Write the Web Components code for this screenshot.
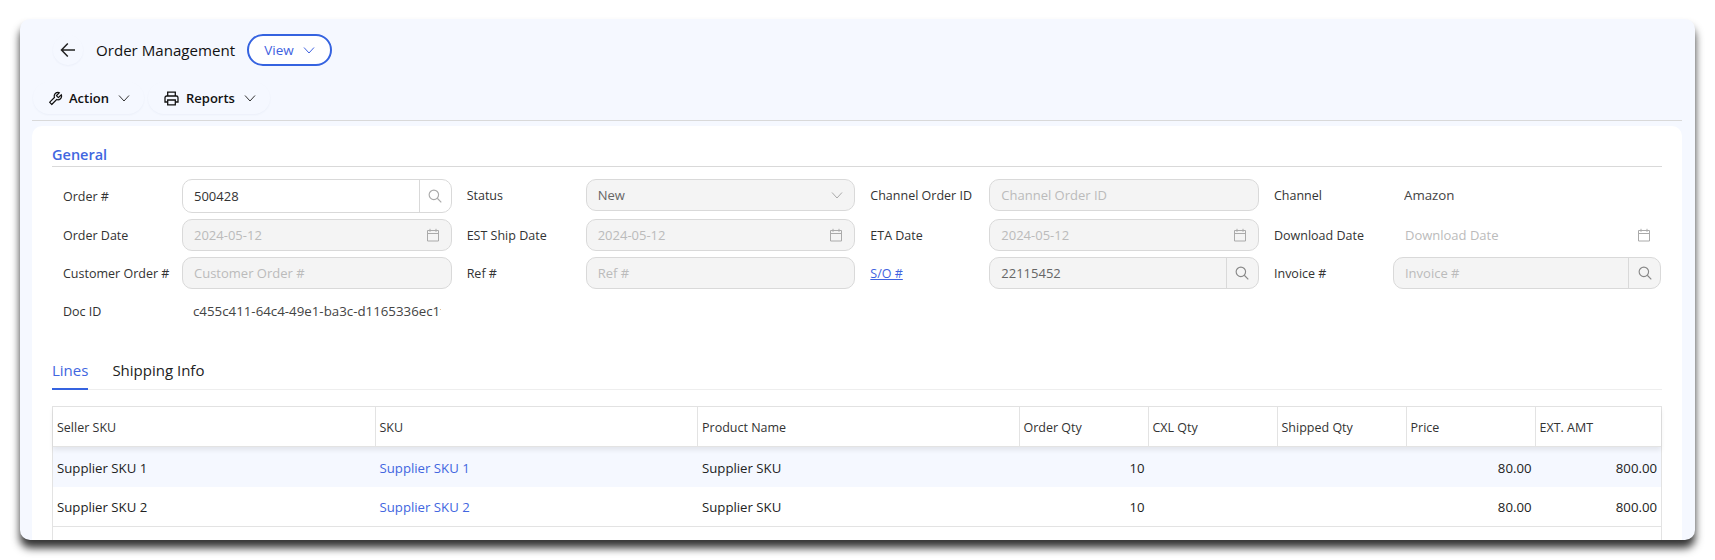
<!DOCTYPE html>
<html>
<head>
<meta charset="utf-8">
<title>Order Management</title>
<style>
    html, body { margin: 0; height: 560px; overflow: hidden; background: #fff; }
    body { font-family: "Open Sans", "Noto Sans", sans-serif; font-size: 12.5px; color: #222; }
</style>
</head>
<body>
<order-window>
    <page-header slot="header" title="Order Management" mode="View"></page-header>
    <tool-bar slot="header">
        <tool-button icon="wrench" label="Action"></tool-button>
        <tool-button icon="printer" label="Reports"></tool-button>
    </tool-bar>
    <section-title>General</section-title>
    <form-grid>
        <form-field label="Order #" kind="search" value="500428" active tall></form-field>
        <form-field label="Status" kind="select" value="New"></form-field>
        <form-field label="Channel Order ID" placeholder="Channel Order ID"></form-field>
        <form-field label="Channel" kind="text" value="Amazon"></form-field>

        <form-field label="Order Date" kind="date" placeholder="2024-05-12"></form-field>
        <form-field label="EST Ship Date" kind="date" placeholder="2024-05-12"></form-field>
        <form-field label="ETA Date" kind="date" placeholder="2024-05-12"></form-field>
        <form-field label="Download Date" kind="date" placeholder="Download Date" bare></form-field>

        <form-field label="Customer Order #" placeholder="Customer Order #"></form-field>
        <form-field label="Ref #" placeholder="Ref #"></form-field>
        <form-field label="S/O #" kind="search" value="22115452" link></form-field>
        <form-field label="Invoice #" kind="search" placeholder="Invoice #" last></form-field>

        <form-field label="Doc ID" kind="text" value="c455c411-64c4-49e1-ba3c-d1165336ec1f"></form-field>
    </form-grid>
    <tab-bar>
        <tab-item active>Lines</tab-item>
        <tab-item>Shipping Info</tab-item>
    </tab-bar>
    <lines-table></lines-table>
</order-window>

<script>
const ICONS = {
    chevron: '<svg width="12" height="12" viewBox="0 0 12 12" fill="none" stroke="currentColor" stroke-width="1"><path d="M1 3.5l5 5.5 5-5.5"/></svg>',
    search: '<svg width="14" height="14" viewBox="0 0 16 16" fill="none" stroke="currentColor" stroke-width="1.3"><circle cx="6.7" cy="6.7" r="5.4"/><path d="M10.6 10.6l4.6 4.6"/></svg>',
    date: '<svg width="14" height="14" viewBox="0 0 14 14" fill="none" stroke="currentColor" stroke-width="1"><path d="M1.5 2.5h11v10.5h-11zM1.5 5.5h11M4 .8v3M10 .8v3"/></svg>',
    back: '<svg width="16" height="16" viewBox="0 0 16 16" fill="none" stroke="currentColor" stroke-width="1.5"><path d="M15 8H1.5M7.8 1.5L1.5 8l6.3 6.5"/></svg>',
    wrench: '<svg width="15" height="15" viewBox="64 64 896 896" fill="currentColor"><path d="M876.6 239.5c-.5-.9-1.2-1.8-2-2.5-5-5-13.1-5-18.1 0L684.2 409.3l-67.9-67.9L788.7 169c.8-.8 1.4-1.6 2-2.5 3.6-6.1 1.6-13.9-4.5-17.5-98.2-58-226.8-44.7-311.3 39.7-67 67-89.2 162-66.5 247.4l-293 293c-3 3-2.8 7.9.3 11l169.7 169.7c3.1 3.1 8.1 3.3 11 .3l292.9-292.9c85.5 22.8 180.5.7 247.6-66.4 84.4-84.5 97.7-213.1 39.7-311.3zM786 499.8c-58.1 58.1-145.3 69.3-214.6 33.6l-8.8 8.8-.1-.1-274 274.1-79.2-79.2 230.1-230.1s0 .1.1.1l52.8-52.8c-35.7-69.3-24.5-156.5 33.6-214.6a184.2 184.2 0 0 1 144-53.5L537 318.9a32.05 32.05 0 0 0 0 45.3l124.5 124.5a32.05 32.05 0 0 0 45.3 0l132.8-132.8c3.7 51.8-14.4 104.8-53.6 143.9z"/></svg>',
    printer: '<svg width="15" height="15" viewBox="0 0 15 15" fill="none" stroke="currentColor" stroke-width="1.3"><path d="M3.7 5V1.2h7.6V5M3.7 11H1V6.7C1 5.7 1.7 5 2.7 5h9.6c1 0 1.7.7 1.7 1.7V11h-2.7"/><path d="M3.7 9h7.6v4.8H3.7z"/></svg>'
};

class OrderWindow extends HTMLElement {
    constructor() {
        super();
        this.attachShadow({ mode: 'open' }).innerHTML = `
            <style>
                :host { display: block; padding: 19px 20px 20px; height: 521px; }
                .window {
                    height: 521px;
                    box-sizing: border-box;
                    background: #f5f8ff;
                    border-radius: 10px;
                    box-shadow: 0 8px 9px rgba(0, 0, 0, 0.8);
                    padding: 0 13px 0 12px;
                    overflow: hidden;
                }
                .header { border-bottom: 1px solid #d9d9d9; height: 101px; }
                .card {
                    margin-top: 5px;
                    height: 420px;
                    box-sizing: border-box;
                    background: #fff;
                    border-radius: 10px 10px 0 0;
                    padding: 0 20px;
                    overflow: hidden;
                }
            </style>
            <div class="window">
                <div class="header"><slot name="header"></slot></div>
                <div class="card"><slot></slot></div>
            </div>`;
    }
}

class PageHeader extends HTMLElement {
    constructor() {
        super();
        this.attachShadow({ mode: 'open' }).innerHTML = `
            <style>
                :host { display: flex; align-items: center; height: 32px; padding: 15px 0 0 21px; }
                .back {
                    width: 30px; height: 30px; border-radius: 50%;
                    display: flex; align-items: center; justify-content: center;
                    box-shadow: 0 1px 2px rgba(60, 80, 140, 0.05);
                    color: #222;
                }
                .title { width: 139px; margin-left: 13px; font-size: 15.1px; color: #111; white-space: nowrap; }
                .pill {
                    margin-left: 12px; width: 85px; height: 32px; box-sizing: border-box;
                    border: 2px solid #3563e0; border-radius: 16px; background: #fff;
                    display: flex; align-items: center; justify-content: center; gap: 9px;
                    color: #3f62e0; font-size: 13.5px;
                }
            </style>
            <span class="back">${ICONS.back}</span>
            <span class="title">${this.getAttribute('title')}</span>
            <span class="pill">${this.getAttribute('mode')}${ICONS.chevron}</span>`;
    }
}

class ToolBar extends HTMLElement {
    constructor() {
        super();
        this.attachShadow({ mode: 'open' }).innerHTML = `
            <style>:host { display: flex; gap: 4px; padding: 0 0 0 1px; margin-top: 16px; }</style>
            <slot></slot>`;
    }
}

class ToolButton extends HTMLElement {
    constructor() {
        super();
        const printer = this.getAttribute('icon') === 'printer';
        this.attachShadow({ mode: 'open' }).innerHTML = `
            <style>
                :host {
                    display: flex; align-items: center; height: 32px; padding: 0 14px 0 ${printer ? 16 : 15}px;
                    border-radius: 16px; box-shadow: 0 1px 2px rgba(60, 80, 140, 0.05);
                    font-weight: 600; font-size: 13px; color: #111;
                }
                .icon { display: flex; margin-right: ${printer ? 7 : 6}px; }
                .arrow { display: flex; margin-left: 9px; color: #333; }
            </style>
            <span class="icon">${ICONS[this.getAttribute('icon')]}</span>
            <span>${this.getAttribute('label')}</span>
            <span class="arrow">${ICONS.chevron}</span>`;
    }
}

class SectionTitle extends HTMLElement {
    constructor() {
        super();
        this.attachShadow({ mode: 'open' }).innerHTML = `
            <style>
                :host {
                    display: block; height: 41px; box-sizing: border-box; padding-top: 18px;
                    border-bottom: 1px solid #d9d9d9; line-height: 22px;
                    font-size: 14.5px; font-weight: 600; color: #4166e0;
                }
            </style>
            <slot></slot>`;
    }
}

class FormGrid extends HTMLElement {
    constructor() {
        super();
        this.attachShadow({ mode: 'open' }).innerHTML = `
            <style>
                :host {
                    display: grid; width: 1615px; margin-top: 12px;
                    grid-template-columns: repeat(4, 403.67px);
                    grid-template-rows: 40px 38px 38px 32px;
                }
            </style>
            <slot></slot>`;
    }
}

class FormField extends HTMLElement {
    constructor() {
        super();
        const kind = this.getAttribute('kind') || 'input';
        const value = this.getAttribute('value');
        const placeholder = this.getAttribute('placeholder');
        const label = this.getAttribute('label');
        const labelHtml = this.hasAttribute('link') ? `<a>${label}</a>` : label;
        const text = value
            ? `<span class="val">${value}</span>`
            : `<span class="ph">${placeholder}</span>`;
        let control;
        if (kind === 'text') {
            control = `<div class="static">${value}</div>`;
        } else {
            let suffix = '';
            if (kind === 'search') suffix = `<span class="addon">${ICONS.search}</span>`;
            if (kind === 'date') suffix = `<span class="ico">${ICONS.date}</span>`;
            if (kind === 'select') suffix = `<span class="ico">${ICONS.chevron}</span>`;
            control = `<div class="box">${text}${suffix}</div>`;
        }
        this.attachShadow({ mode: 'open' }).innerHTML = `
            <style>
                :host { display: flex; padding: 0 4px 0 11px; min-width: 0; height: 32px; align-items: center; font-size: 12.5px; }
                :host([tall]) { height: 34px; }
                :host([last]) { padding-right: 5.5px; }
                .label { width: 119px; flex: none; color: #333; white-space: nowrap; }
                a { color: #3f62e0; text-decoration: underline; }
                .box {
                    flex: 1; min-width: 0; height: 100%; box-sizing: border-box;
                    display: flex; align-items: center; padding-left: 11px;
                    border: 1px solid #d9d9d9; border-radius: 10px; background: #f4f4f4;
                    overflow: hidden; font-size: 13px;
                }
                :host([active]) .box { background: #fff; }
                :host([bare]) .box { background: transparent; border-color: transparent; }
                .val, .ph { flex: 1; white-space: nowrap; }
                .val { color: #666; }
                :host([active]) .val { color: #333; }
                .ph { color: #bbb; }
                .ico { display: flex; margin-right: 11px; color: #aaa; }
                .addon {
                    width: 31px; height: 100%; flex: none; border-left: 1px solid #d9d9d9;
                    display: flex; align-items: center; justify-content: center; color: #888;
                }
                :host([active]) .addon { color: #aaa; }
                .static {
                    flex: 1; min-width: 0; margin: 0 10.5px 0 11px; overflow: hidden; white-space: nowrap; color: #444; font-size: 13.3px;
                }
            </style>
            <span class="label">${labelHtml}</span>
            ${control}`;
    }
}

class TabBar extends HTMLElement {
    constructor() {
        super();
        this.attachShadow({ mode: 'open' }).innerHTML = `
            <style>
                :host { display: flex; gap: 24px; margin-top: 25px; height: 38px; box-sizing: border-box; border-bottom: 1px solid #eee; }
            </style>
            <slot></slot>`;
    }
}

class TabItem extends HTMLElement {
    constructor() {
        super();
        this.attachShadow({ mode: 'open' }).innerHTML = `
            <style>
                :host { display: block; height: 38px; box-sizing: border-box; padding-top: 7px; line-height: 22px; font-size: 15px; color: #222; }
                :host([active]) { color: #4166e0; border-bottom: 2px solid #3563e0; }
            </style>
            <slot></slot>`;
    }
}

class LinesTable extends HTMLElement {
    constructor() {
        super();
        const cols = ['Seller SKU', 'SKU', 'Product Name', 'Order Qty', 'CXL Qty', 'Shipped Qty', 'Price', 'EXT. AMT'];
        const rows = [
            ['Supplier SKU 1', 'Supplier SKU 1', 'Supplier SKU', '10', '', '', '80.00', '800.00'],
            ['Supplier SKU 2', 'Supplier SKU 2', 'Supplier SKU', '10', '', '', '80.00', '800.00']
        ];
        const cell = (text, i) => {
            const cls = i === 1 ? 'link' : (i > 2 ? 'num' : '');
            return `<div class="${cls}">${text}</div>`;
        };
        this.attachShadow({ mode: 'open' }).innerHTML = `
            <style>
                :host {
                    display: block; margin-top: 16px; font-size: 12.5px;
                    border: 1px solid #e3e3e3; border-bottom: 0;
                    --cols: 322.5px 322.5px 321.5px 129px 129px 129px 129px 1fr;
                }
                .head, .row { display: grid; grid-template-columns: var(--cols); }
                .head { height: 40px; box-sizing: border-box; position: relative; box-shadow: 0 3px 5px rgba(0, 0, 0, 0.08); border-bottom: 1px solid #e3e3e3; }
                .head div { display: flex; align-items: center; padding: 1px 0 0 4px; border-right: 1px solid #e3e3e3; color: #333; }
                .head div:last-child { border-right: 0; }
                .row { height: 39.5px; box-sizing: border-box; padding-top: 2px; align-items: center; color: #222; font-size: 13.2px; }
                .row.first { background: #f5f8ff; }
                .row div { padding: 0 4px; white-space: nowrap; }
                .link { color: #4166e0; }
                .num { text-align: right; }
                .end { height: 40px; border-top: 1px solid #e3e3e3; }
            </style>
            <div class="head">${cols.map(c => `<div>${c}</div>`).join('')}</div>
            ${rows.map((r, n) => `<div class="row ${n === 0 ? 'first' : ''}">${r.map(cell).join('')}</div>`).join('')}
            <div class="end"></div>`;
    }
}

customElements.define('order-window', OrderWindow);
customElements.define('page-header', PageHeader);
customElements.define('tool-bar', ToolBar);
customElements.define('tool-button', ToolButton);
customElements.define('section-title', SectionTitle);
customElements.define('form-grid', FormGrid);
customElements.define('form-field', FormField);
customElements.define('tab-bar', TabBar);
customElements.define('tab-item', TabItem);
customElements.define('lines-table', LinesTable);
</script>
</body>
</html>
